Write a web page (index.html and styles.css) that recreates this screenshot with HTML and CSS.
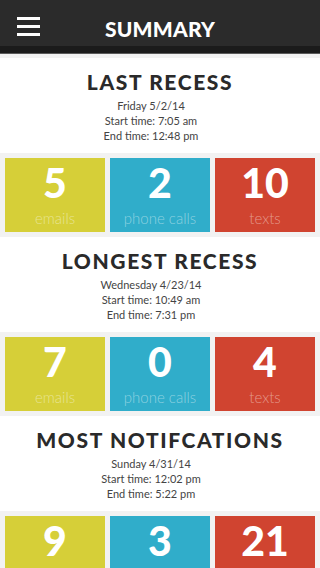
FILE: index.html
```html
<!DOCTYPE html>
<html lang="en">
<head>
    <meta charset="UTF-8">
    <meta name="viewport" content="width=device-width, initial-scale=1.0">
    <title>Summary</title>
    <link rel="stylesheet" href="styles.css">
</head>
<body>
    <header class="topbar">
        <button class="menu-btn" aria-label="Menu">
            <span></span><span></span><span></span>
        </button>
        <h1>Summary</h1>
    </header>

    <main class="content">
        <section class="recess">
            <h2>Last Recess</h2>
            <p>Friday 5/2/14</p>
            <p>Start time: 7:05 am</p>
            <p>End time: 12:48 pm</p>
        </section>
        <div class="stats">
            <div class="stat emails"><span class="num">5</span><span class="label">emails</span></div>
            <div class="stat calls"><span class="num">2</span><span class="label">phone calls</span></div>
            <div class="stat texts"><span class="num">10</span><span class="label">texts</span></div>
        </div>

        <section class="recess">
            <h2>Longest Recess</h2>
            <p>Wednesday 4/23/14</p>
            <p>Start time: 10:49 am</p>
            <p>End time: 7:31 pm</p>
        </section>
        <div class="stats">
            <div class="stat emails"><span class="num">7</span><span class="label">emails</span></div>
            <div class="stat calls"><span class="num">0</span><span class="label">phone calls</span></div>
            <div class="stat texts"><span class="num">4</span><span class="label">texts</span></div>
        </div>

        <section class="recess">
            <h2>Most Notifcations</h2>
            <p>Sunday 4/31/14</p>
            <p>Start time: 12:02 pm</p>
            <p>End time: 5:22 pm</p>
        </section>
        <div class="stats">
            <div class="stat emails"><span class="num">9</span><span class="label">emails</span></div>
            <div class="stat calls"><span class="num">3</span><span class="label">phone calls</span></div>
            <div class="stat texts"><span class="num">21</span><span class="label">texts</span></div>
        </div>
    </main>
</body>
</html>
```

FILE: styles.css
```css
:root {
    --bar-dark: #2b2b2b;
    --bar-darker: #1b1b1b;
    --page-gray: #f2f2f2;
    --text-color: #444444;
    --title-color: #2a2a2a;
    --yellow: #d6cf38;
    --blue: #30adca;
    --red: #d04430;
    --white: #ffffff;
}

* {
    margin: 0;
    padding: 0;
    box-sizing: border-box;
}

body {
    background: var(--page-gray);
    color: var(--text-color);
    font-family: Lato, 'Open Sans', sans-serif;
}

.topbar {
    position: relative;
    height: 53px;
    background: var(--bar-dark);
    border-bottom: 7px solid var(--bar-darker);
    box-shadow: 0 1px 0 #5a5a5a;
    display: flex;
    align-items: center;
    justify-content: center;
    padding-top: 11px;
}

.topbar h1 {
    color: var(--white);
    font-size: 21px;
    font-weight: 900;
    letter-spacing: 0.2px;
    text-transform: uppercase;
    line-height: 1;
}

.menu-btn {
    position: absolute;
    left: 17px;
    top: 17px;
    width: 23px;
    display: flex;
    flex-direction: column;
    gap: 5px;
    background: none;
    border: none;
}

.menu-btn span {
    display: block;
    height: 3px;
    background: var(--white);
}

.content {
    padding-top: 5px;
}

.recess {
    background: var(--white);
    height: 95px;
    text-align: center;
    padding-top: 12px;
}

.recess h2 {
    color: var(--title-color);
    font-size: 21px;
    font-weight: 900;
    letter-spacing: 1.6px;
    text-transform: uppercase;
    line-height: 24px;
    margin-bottom: 4px;
}

.recess p {
    font-size: 11px;
    line-height: 15px;
    padding-right: 18px;
}

.stats {
    display: flex;
    gap: 5px;
    padding: 5px;
}

.stat {
    flex: 1;
    height: 74px;
    color: var(--white);
    display: flex;
    flex-direction: column;
    align-items: center;
    padding-top: 5px;
}

.stat .num {
    font-size: 41px;
    font-weight: 900;
    line-height: 40px;
}

.stat .label {
    font-size: 15px;
    font-weight: 300;
    line-height: 18px;
    margin-top: 6px;
    color: rgba(255, 255, 255, 0.45);
}

.emails { background: var(--yellow); }
.calls { background: var(--blue); }
.texts { background: var(--red); }
```
